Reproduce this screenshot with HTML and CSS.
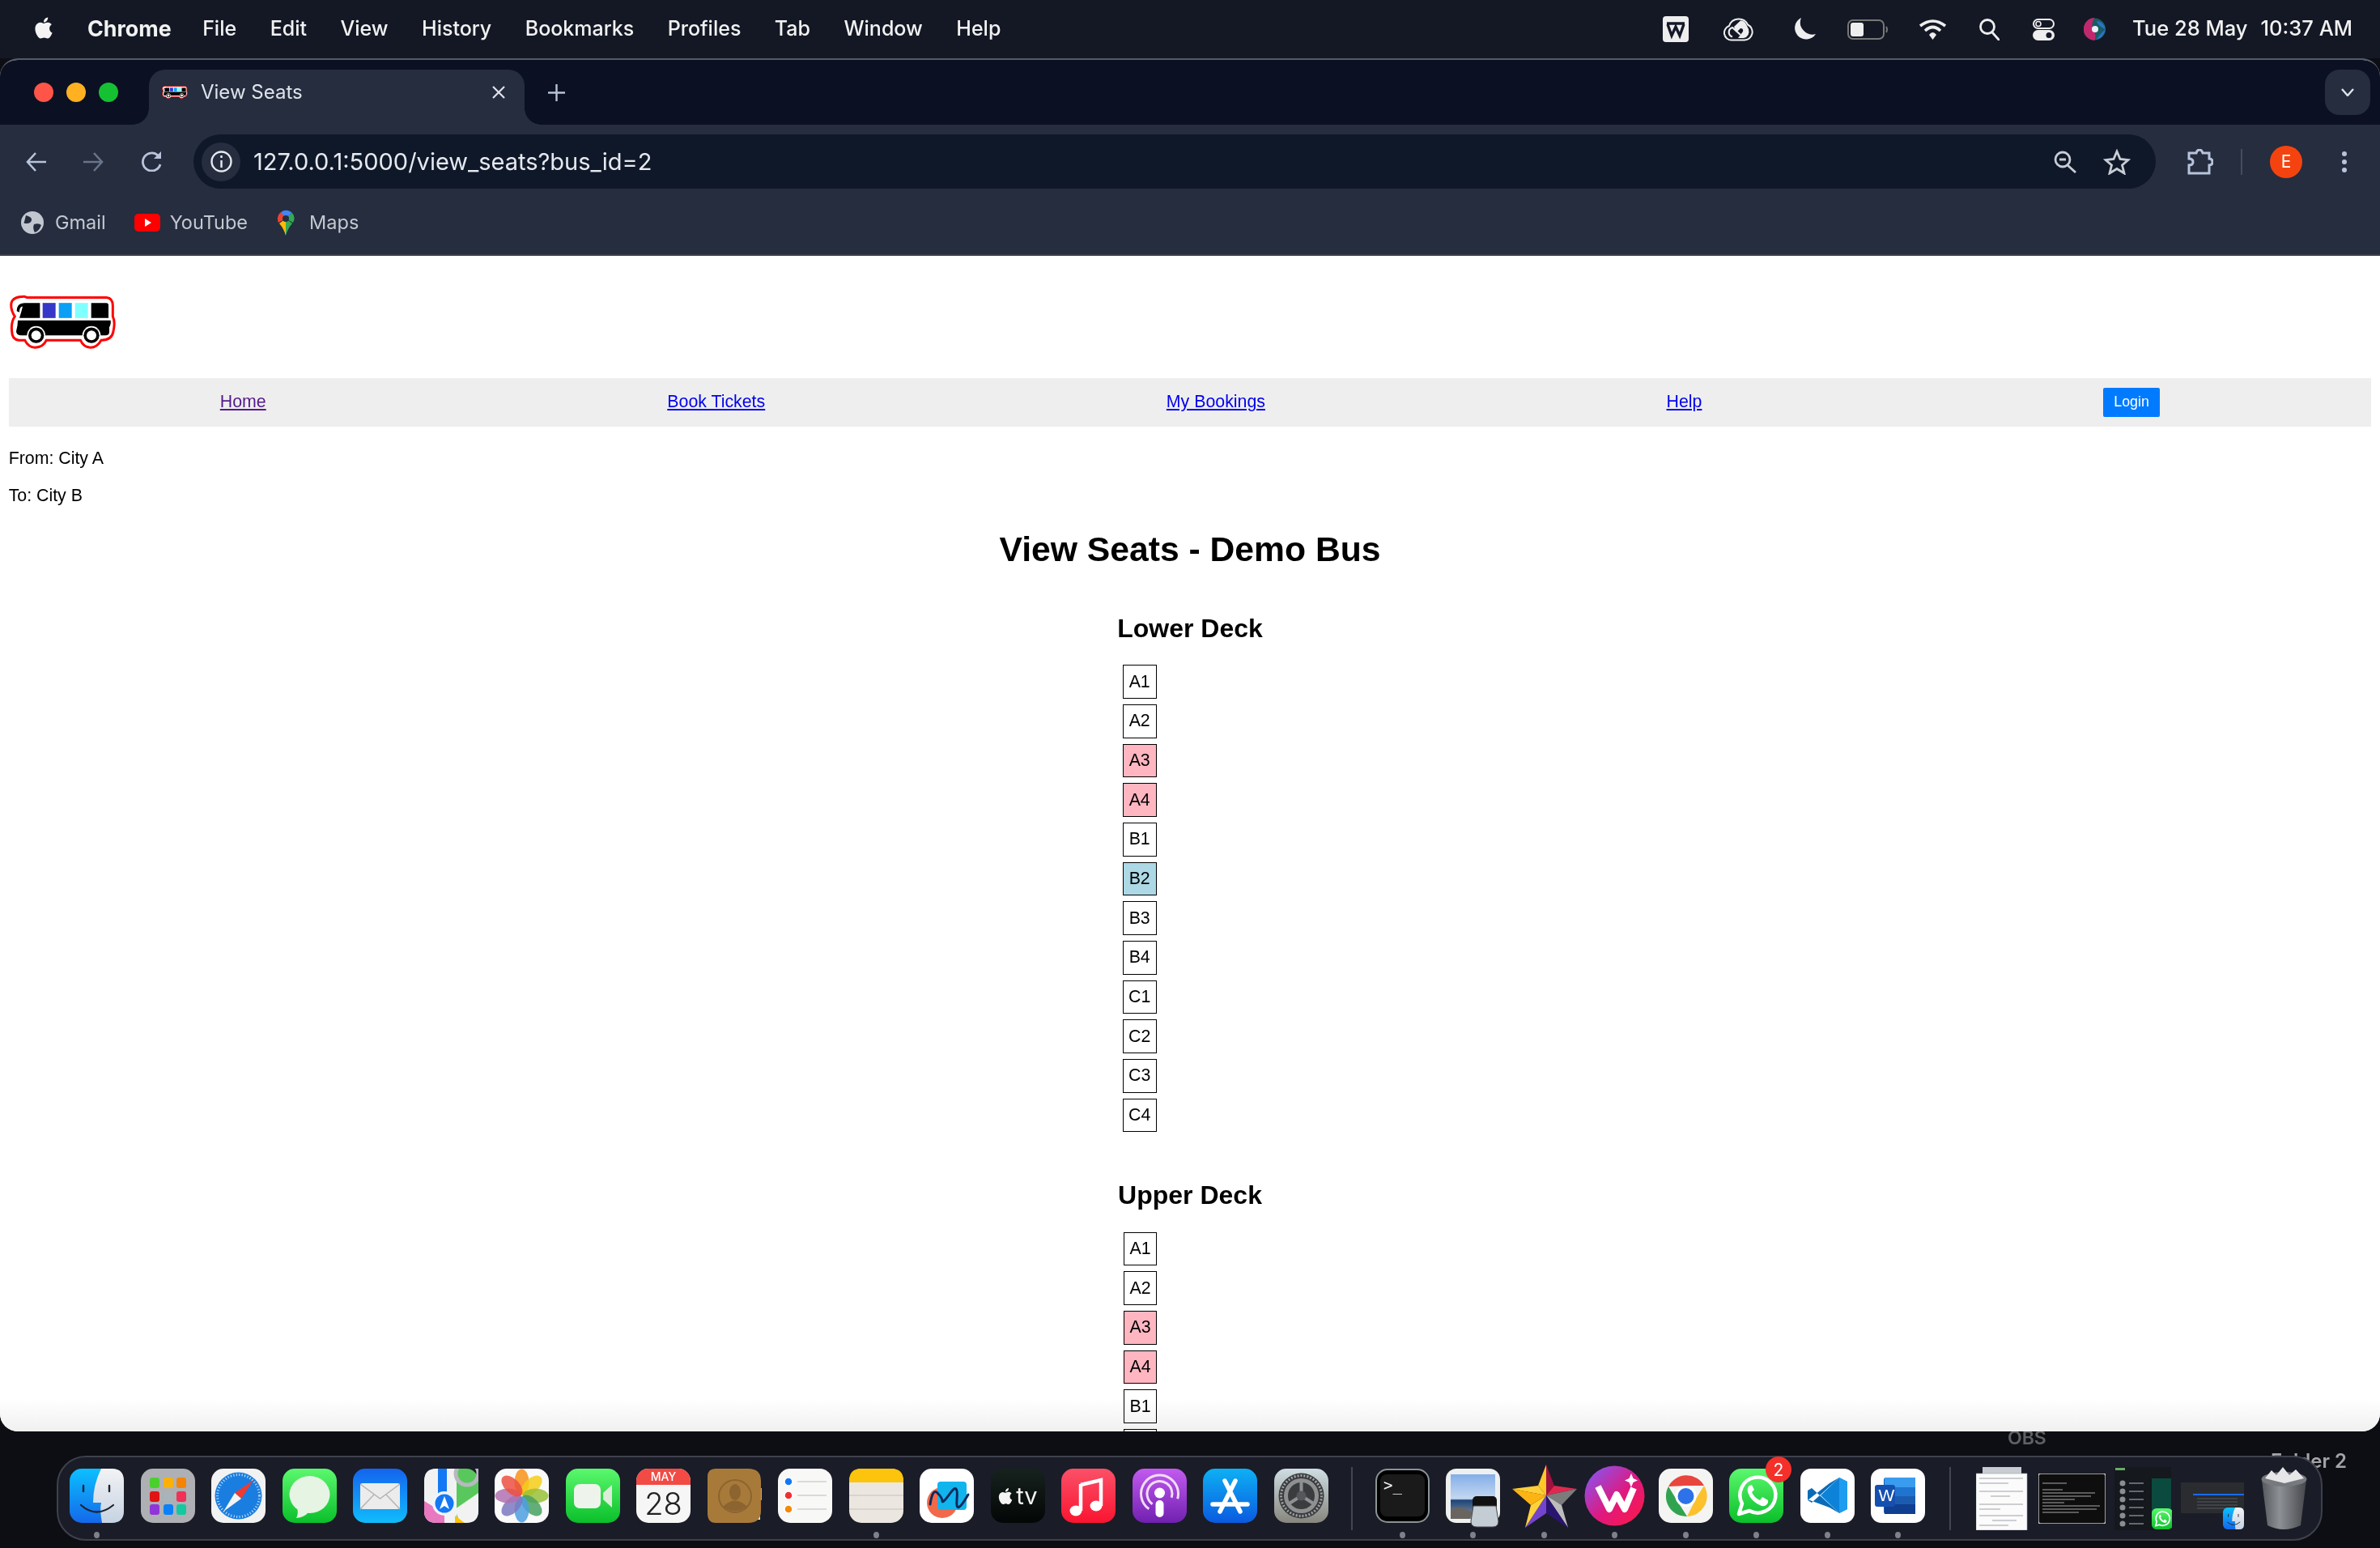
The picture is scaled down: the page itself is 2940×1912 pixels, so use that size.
FILE: index.html
```html
<!DOCTYPE html>
<html lang="en">
<head>
  <meta charset="UTF-8">
  <title>View Seats</title>
  <link rel="stylesheet" href="styles.css">
</head>
<body>
  <!-- Shared shapes and gradients -->
  <svg class="defs" width="0" height="0" aria-hidden="true">
    <defs>
      <linearGradient id="gFinder" x1="0" y1="0" x2="0" y2="1"><stop offset="0" stop-color="#0cc0ff"/><stop offset="1" stop-color="#1468ea"/></linearGradient>
      <linearGradient id="gFinderR" x1="0" y1="0" x2="0" y2="1"><stop offset="0" stop-color="#f2f3f5"/><stop offset="1" stop-color="#c6d2e2"/></linearGradient>
      <linearGradient id="gGreen" x1="0" y1="0" x2="0" y2="1"><stop offset="0" stop-color="#5bf86e"/><stop offset="1" stop-color="#0abf2a"/></linearGradient>
      <linearGradient id="gMail" x1="0" y1="0" x2="0" y2="1"><stop offset="0" stop-color="#1464ee"/><stop offset="1" stop-color="#10bcfc"/></linearGradient>
      <linearGradient id="gMusic" x1="0" y1="0" x2="0" y2="1"><stop offset="0" stop-color="#fb5068"/><stop offset="1" stop-color="#fa1430"/></linearGradient>
      <linearGradient id="gPod" x1="0" y1="0" x2="0" y2="1"><stop offset="0" stop-color="#c35af0"/><stop offset="1" stop-color="#7020b0"/></linearGradient>
      <linearGradient id="gStore" x1="0" y1="0" x2="0" y2="1"><stop offset="0" stop-color="#0eb0f4"/><stop offset="1" stop-color="#0a5ae0"/></linearGradient>
      <linearGradient id="gSet" x1="0" y1="0" x2="0" y2="1"><stop offset="0" stop-color="#cfdde2"/><stop offset="1" stop-color="#87867e"/></linearGradient>
      <linearGradient id="gViv" x1="0" y1="0" x2="1" y2="1"><stop offset="0" stop-color="#7d5cff"/><stop offset=".55" stop-color="#e0187e"/><stop offset="1" stop-color="#ff1a40"/></linearGradient>
      <linearGradient id="gSea" x1="0" y1="0" x2="0" y2="1"><stop offset="0" stop-color="#84aee8"/><stop offset=".55" stop-color="#c4d8f2"/><stop offset=".58" stop-color="#1d4478"/><stop offset="1" stop-color="#8c98a4"/></linearGradient>
      <linearGradient id="gTrash" x1="0" y1="0" x2="1" y2="0"><stop offset="0" stop-color="#55585c"/><stop offset=".4" stop-color="#8d9094"/><stop offset="1" stop-color="#45474b"/></linearGradient>
      <symbol id="apple" viewBox="0 0 24 24"><path d="M12.152 6.896c-.948 0-2.415-1.078-3.96-1.04-2.04.027-3.91 1.183-4.961 3.014-2.117 3.675-.546 9.103 1.519 12.09 1.013 1.454 2.208 3.09 3.792 3.039 1.52-.065 2.09-.987 3.935-.987 1.831 0 2.35.987 3.96.948 1.637-.026 2.676-1.48 3.676-2.948 1.156-1.688 1.636-3.325 1.662-3.415-.039-.013-3.182-1.221-3.22-4.857-.026-3.04 2.48-4.494 2.597-4.559-1.429-2.09-3.623-2.324-4.39-2.376-2-.156-3.675 1.09-4.61 1.09zM15.53 3.83c.843-1.012 1.4-2.427 1.245-3.83-1.207.052-2.662.805-3.532 1.818-.78.896-1.454 2.338-1.273 3.714 1.338.104 2.715-.688 3.559-1.701"/></symbol>
      <symbol id="bus" viewBox="33 70 399 200">
        <path d="M42 100Q48 76 90 76L100 80H395Q418 82 418 110V150Q428 170 420 205Q415 238 375 238Q360 265 335 265Q310 265 298 238H172Q160 265 130 265Q105 265 92 238H70Q44 235 44 205Q40 170 55 150Q38 125 42 100Z" fill="#fff" stroke="#f00" stroke-width="9"/>
        <path d="M62 130Q62 100 90 100H148V156H72Q80 130 84 113Q72 113 72 135Z"/>
        <rect x="158" y="100" width="48" height="56" fill="#3636c8"/>
        <rect x="218" y="100" width="48" height="56" fill="#0aa0f5"/>
        <rect x="278" y="100" width="48" height="56" fill="#80ffff"/>
        <path d="M338 100H394Q402 100 402 108V156H338Z"/>
        <path d="M66 165H410Q412 180 405 190V208Q405 220 390 220H80Q60 220 60 205Q66 185 66 165Z"/>
        <circle cx="134" cy="220" r="34" fill="#fff"/><circle cx="134" cy="220" r="29"/><circle cx="134" cy="220" r="18" fill="#fff"/>
        <circle cx="339" cy="220" r="34" fill="#fff"/><circle cx="339" cy="220" r="29"/><circle cx="339" cy="220" r="18" fill="#fff"/>
      </symbol>
      <symbol id="finderFace" viewBox="0 0 67 67">
        <rect width="67" height="67" rx="15" fill="url(#gFinder)"/>
        <path d="M39 0H52Q67 0 67 15V52Q67 67 52 67H40Q37 50 39 42H29Q29 20 39 0Z" fill="url(#gFinderR)"/>
        <path d="M17 21V28M49 21V28" stroke="#1c2430" stroke-width="2.4" stroke-linecap="round"/>
        <path d="M14 45Q33 62 54 45" fill="none" stroke="#1c2430" stroke-width="2.2" stroke-linecap="round"/>
      </symbol>
      <symbol id="waFace" viewBox="0 0 67 67">
        <rect width="67" height="67" rx="15" fill="url(#gGreen)"/>
        <path d="M12 56L16 43A22 22 0 1 1 25 52Z" fill="none" stroke="#fff" stroke-width="4.5" stroke-linejoin="round"/>
        <path d="M25 21Q22 23 23 29Q27 41 40 46Q46 47 48 42L48 39L41 35L38 39Q31 36 28 29L31 26L28 20Z" fill="#fff"/>
      </symbol>
    </defs>
  </svg>

  <!-- macOS menu bar -->
  <header class="menubar">
    <svg class="menu-apple" width="26" height="31"><use href="#apple"/></svg>
    <nav class="menu-items">
      <span class="menu-app">Chrome</span>
      <span>File</span><span>Edit</span><span>View</span><span>History</span><span>Bookmarks</span><span>Profiles</span><span>Tab</span><span>Window</span><span>Help</span>
    </nav>
    <div class="status">
      <svg class="st-w" width="32" height="32" viewBox="0 0 32 32"><rect width="32" height="32" rx="4" fill="#eee"/><path d="M5 9H27M6 10L11 24L16 13L21 24L26 10" fill="none" stroke="#15182a" stroke-width="3.4"/></svg>
      <svg class="st-cc" width="38" height="30" viewBox="0 0 38 30"><path d="M11 28.500A9 9 0 0 1 8 11A12.500 12.500 0 0 1 31 9.500A10 10 0 0 1 27 28.500Z" fill="none" stroke="#eee" stroke-width="2"/><path d="M14 12L22 4.500Q27 4 29 9L32 15Q34 24 26 26H19L25 18Q26 14 22 14L17 19Z" fill="#eee"/><path d="M12 24.500A6 6 0 0 1 12 13L22 22" fill="none" stroke="#eee" stroke-width="2.200"/></svg>
      <svg class="st-moon" width="29" height="28" viewBox="0 0 29 28"><path d="M11 0A14 14 0 1 0 29 20A15 15 0 0 1 11 0Z" fill="#eee"/></svg>
      <svg class="st-batt" width="50" height="25" viewBox="0 0 50 25"><rect x="1" y="1" width="44" height="23" rx="6" fill="none" stroke="#777" stroke-width="2"/><rect x="4" y="4" width="16" height="17" rx="3" fill="#eee"/><path d="M48 9Q50 12.500 48 16" stroke="#777" stroke-width="2" fill="none"/></svg>
      <svg class="st-wifi" width="35" height="26" viewBox="0 0 35 26" fill="none" stroke="#eee" stroke-width="3.6"><path d="M2 9Q17.500-3 33 9M8 15Q17.500 6 27 15"/><path d="M13 20Q17.500 14 22 20L17.500 26Z" fill="#eee" stroke="none"/></svg>
      <svg class="st-search" width="25" height="27" viewBox="0 0 25 27" fill="none" stroke="#eee" stroke-width="2.8"><circle cx="10" cy="10" r="8.500"/><path d="M16 17L24 26" stroke-linecap="round"/></svg>
      <svg class="st-ctrl" width="27" height="27" viewBox="0 0 27 27"><rect x="1" y="1" width="25" height="11" rx="5.500" fill="none" stroke="#eee" stroke-width="2"/><circle cx="7" cy="6.500" r="3" fill="none" stroke="#eee" stroke-width="1.600"/><rect y="14" width="27" height="13" rx="6.500" fill="#eee"/><circle cx="20" cy="20.500" r="3.500" fill="#15182a"/></svg>
      <svg class="st-siri" width="27" height="28" viewBox="0 0 27 28"><circle cx="13.500" cy="14" r="13.500" fill="#1a5c64"/><path d="M0 14A13.500 13.500 0 0 1 13.500 0Q8 7 12 14T13.500 28A13.500 13.500 0 0 1 0 14Z" fill="#c0286e"/><path d="M27 14Q18 11 16 4Q24 4 27 14ZM27 14Q20 20 15 27Q25 25 27 14Z" fill="#2a74c4"/><circle cx="14" cy="14" r="4" fill="#e8f0f8"/></svg>
      <span class="st-date">Tue 28 May</span>
      <span class="st-time">10:37 AM</span>
    </div>
  </header>

  <!-- Desktop labels peeking out behind the dock -->
  <span class="desk-label desk-obs">OBS</span>
  <span class="desk-label desk-folder">Folder 2</span>

  <!-- Browser window -->
  <section class="window">
    <div class="tabstrip">
      <div class="traffic"><i class="tl-red"></i><i class="tl-yellow"></i><i class="tl-green"></i></div>
      <div class="tab">
        <svg class="tab-icon" width="32" height="20"><use href="#bus"/></svg>
        <span class="tab-title">View Seats</span>
        <svg class="tab-close" width="16" height="16" viewBox="0 0 16 16"><path d="M1 1L15 15M15 1L1 15" stroke="#dfe3ea" stroke-width="2.200"/></svg>
      </div>
      <svg class="tab-new" width="21" height="21" viewBox="0 0 21 21"><path d="M10.500 0V21M0 10.500H21" stroke="#b8c2d8" stroke-width="2.400"/></svg>
      <div class="tab-search"><svg width="16" height="10" viewBox="0 0 16 10"><path d="M1 1L8 9L15 1" fill="none" stroke="#dfe3ea" stroke-width="2.400"/></svg></div>
    </div>

    <div class="toolbar">
      <svg class="tb-back" width="25" height="24" viewBox="0 0 25 24" fill="none" stroke="#b8c4dc" stroke-width="2.600"><path d="M25 12H2M12 1L2 12L12 23"/></svg>
      <svg class="tb-fwd" width="25" height="24" viewBox="0 0 25 24" fill="none" stroke="#6a7488" stroke-width="2.600"><path d="M0 12H23M13 1L23 12L13 23"/></svg>
      <svg class="tb-reload" width="26" height="25" viewBox="0 0 26 25" fill="none" stroke="#b8c4dc" stroke-width="2.800"><path d="M23 16A11 11 0 1 1 20 5"/><path d="M24 0V9H15" fill="#b8c4dc" stroke="none"/></svg>
      <div class="omnibox">
        <div class="omni-info"><svg width="27" height="27" viewBox="0 0 27 27" fill="none" stroke="#e6e9ef" stroke-width="2.400"><circle cx="13.500" cy="13.500" r="12"/><path d="M13.500 12V21M13.500 6V9"/></svg></div>
        <span class="omni-url">127.0.0.1:5000/view_seats?bus_id=2</span>
        <svg class="omni-zoom" width="28" height="28" viewBox="0 0 28 28" fill="none" stroke="#c8ccd4" stroke-width="2.800"><circle cx="11" cy="11" r="9"/><path d="M17 18L27 27M7 11H15"/></svg>
        <svg class="omni-star" width="34" height="32" viewBox="0 0 34 32" fill="none" stroke="#c8ccd4" stroke-width="2.800"><path d="M17 3L21 12.500L31 13.500L23.500 20L26 30L17 24.500L8 30L10.500 20L3 13.500L13 12.500Z"/></svg>
      </div>
      <svg class="tb-ext" width="33" height="32" viewBox="0 0 33 32" fill="none" stroke="#b8c4dc" stroke-width="3"><path d="M3 5H12Q13 1 16 1T20 5H28V12Q32 12 32 16T28 20V30H3V20Q8 20 8 16T3 12Z"/></svg>
      <i class="tb-sep"></i>
      <div class="avatar">E</div>
      <svg class="tb-menu" width="6" height="26" viewBox="0 0 6 26" fill="#b8c4dc"><circle cx="3" cy="3" r="3"/><circle cx="3" cy="13" r="3"/><circle cx="3" cy="23" r="3"/></svg>
    </div>

    <div class="bookmarks">
      <div class="bm bm-gmail">
        <svg width="28" height="28" viewBox="0 0 28 28"><circle cx="14" cy="14" r="14" fill="#c2c6cf"/><path d="M6 5Q14 7 13 11T7 15T4 13ZM16 16Q22 14 25 17Q22 25 17 26Q14 21 16 16Z" fill="#252d3f"/></svg>
        <span>Gmail</span>
      </div>
      <div class="bm bm-yt">
        <svg width="32" height="22" viewBox="0 0 32 22"><rect width="32" height="22" rx="5" fill="#f00"/><path d="M13 6L21 11L13 16Z" fill="#fff"/></svg>
        <span>YouTube</span>
      </div>
      <div class="bm bm-maps">
        <svg width="22" height="32" viewBox="0 0 22 32"><path d="M11 32Q9 24 3 17L11 11Z" fill="#fbbc04"/><path d="M11 32Q13 24 19 17L11 11Z" fill="#34a853"/><path d="M2 16A10.500 10.500 0 0 1 5 3L12 10Z" fill="#ea4335"/><path d="M5 3A10.500 10.500 0 0 1 19 4L11 11Z" fill="#4285f4"/><path d="M19 4A10.500 10.500 0 0 1 20 16L11 11Z" fill="#34a853"/><circle cx="11" cy="11" r="4" fill="#252d3f"/></svg>
        <span>Maps</span>
      </div>
    </div>

    <!-- Page content -->
    <main class="page">
      <div class="site-head"><svg class="logo" width="133" height="67"><use href="#bus"/></svg></div>
      <nav class="site-nav">
        <a class="visited" href="#">Home</a>
        <a href="#">Book Tickets</a>
        <a href="#">My Bookings</a>
        <a href="#">Help</a>
        <button class="login">Login</button>
      </nav>
      <p class="route route-first">From: City A</p>
      <p class="route">To: City B</p>
      <h1>View Seats - Demo Bus</h1>
      <div class="decks">
        <section class="deck">
          <h2>Lower Deck</h2>
          <div class="seat">A1</div><div class="seat">A2</div><div class="seat booked">A3</div><div class="seat booked">A4</div>
          <div class="seat">B1</div><div class="seat mine">B2</div><div class="seat">B3</div><div class="seat">B4</div>
          <div class="seat">C1</div><div class="seat">C2</div><div class="seat">C3</div><div class="seat">C4</div>
        </section>
        <section class="deck">
          <h2>Upper Deck</h2>
          <div class="seat">A1</div><div class="seat">A2</div><div class="seat booked">A3</div><div class="seat booked">A4</div>
          <div class="seat">B1</div><div class="seat">B2</div>
        </section>
      </div>
    </main>
  </section>

  <!-- Dock -->
  <footer class="dock">
    <div class="dock-item running"><svg width="67" height="67"><use href="#finderFace"/></svg></div>
    <div class="dock-item"><svg width="67" height="67" viewBox="0 0 67 67"><rect width="67" height="67" rx="15" fill="#aeb0b4"/>
      <rect x="11" y="11" width="12" height="13" rx="3" fill="#4ad02c"/><rect x="28" y="11" width="12" height="13" rx="3" fill="#fcb008"/><rect x="44" y="11" width="12" height="13" rx="3" fill="#f58404"/>
      <rect x="11" y="28" width="12" height="13" rx="3" fill="#e01414"/><rect x="28" y="28" width="12" height="13" rx="3" fill="#a8b4b8"/><rect x="44" y="28" width="12" height="13" rx="3" fill="#f03058"/>
      <rect x="11" y="44" width="12" height="13" rx="3" fill="#9036d8"/><rect x="28" y="44" width="12" height="13" rx="3" fill="#0c80f8"/><rect x="44" y="44" width="12" height="13" rx="3" fill="#14c8a0"/></svg></div>
    <div class="dock-item"><svg width="67" height="67" viewBox="0 0 67 67"><rect width="67" height="67" rx="15" fill="#f2f2f2"/><circle cx="33.500" cy="33.500" r="29" fill="#1a7ee0"/><circle cx="33.500" cy="33.500" r="26" fill="none" stroke="#cfe4f8" stroke-width="3" stroke-dasharray="1 2.500"/><path d="M52 14L29 30L37 37Z" fill="#f03a30"/><path d="M15 53L29 30L37 37Z" fill="#f4f4f4"/></svg></div>
    <div class="dock-item"><svg width="67" height="67" viewBox="0 0 67 67"><rect width="67" height="67" rx="15" fill="url(#gGreen)"/><ellipse cx="33.500" cy="32" rx="25" ry="23" fill="#e6f4e4"/><path d="M18 48Q20 56 17 61Q27 60 32 54Z" fill="#e6f4e4"/></svg></div>
    <div class="dock-item"><svg width="67" height="67" viewBox="0 0 67 67"><rect width="67" height="67" rx="15" fill="url(#gMail)"/><rect x="9" y="18" width="49" height="32" rx="3" fill="#ececec"/><path d="M9 19L33.500 37L58 19M9 50L26 32M58 50L41 32" fill="none" stroke="#b4b4b4" stroke-width="1.500"/></svg></div>
    <div class="dock-item"><svg width="67" height="67" viewBox="0 0 67 67"><rect width="67" height="67" rx="15" fill="#58c85c"/><path d="M0 15Q0 0 15 0H40V67H15Q0 67 0 52Z" fill="#f2f2f2"/><path d="M0 40L25 55V67H15Q0 67 0 52Z" fill="#e878c0"/><path d="M38 50L67 30V52Q67 67 52 67H44Z" fill="#f2f2f2"/><path d="M38 58L50 67H38Z" fill="#fcc400"/><rect x="17" y="0" width="11" height="36" fill="#1478f4"/><circle cx="53" cy="6" r="14" fill="none" stroke="#b8b8c0" stroke-width="5"/><circle cx="25" cy="43" r="15" fill="#f0f4fa"/><circle cx="25" cy="43" r="11.500" fill="#1478f4"/><path d="M25 34L31 50L25 46L19 50Z" fill="#fff"/></svg></div>
    <div class="dock-item"><svg width="67" height="67" viewBox="0 0 67 67"><rect width="67" height="67" rx="15" fill="#fafafa"/><g transform="translate(33.500 33.500)"><ellipse cy="-17" rx="9" ry="16" fill="#f89018" opacity=".85"/><ellipse cy="-17" rx="9" ry="16" fill="#f4cc18" opacity=".85" transform="rotate(45)"/><ellipse cy="-17" rx="9" ry="16" fill="#98c038" opacity=".85" transform="rotate(90)"/><ellipse cy="-17" rx="9" ry="16" fill="#48a060" opacity=".85" transform="rotate(135)"/><ellipse cy="-17" rx="9" ry="16" fill="#4c9ee0" opacity=".85" transform="rotate(180)"/><ellipse cy="-17" rx="9" ry="16" fill="#7c78c0" opacity=".85" transform="rotate(225)"/><ellipse cy="-17" rx="9" ry="16" fill="#b070b0" opacity=".85" transform="rotate(270)"/><ellipse cy="-17" rx="9" ry="16" fill="#ec5040" opacity=".85" transform="rotate(315)"/></g></svg></div>
    <div class="dock-item"><svg width="67" height="67" viewBox="0 0 67 67"><rect width="67" height="67" rx="15" fill="url(#gGreen)"/><rect x="10" y="19" width="33" height="30" rx="7" fill="#eef4ec"/><path d="M46 30L57 20V48L46 38Z" fill="#dcecd8"/></svg></div>
    <div class="dock-item"><div class="cal"><span class="cal-month">MAY</span><span class="cal-day">28</span></div></div>
    <div class="dock-item"><svg width="67" height="67" viewBox="0 0 67 67"><rect x="50" y="8" width="15" height="55" fill="#e8e8e8"/><rect x="60" y="24" width="7" height="15" fill="#f0a030"/><path d="M10 0H50Q66 0 66 15V52Q66 67 50 67H10Q0 67 0 55V10Q0 0 10 0Z" fill="#a87a3a"/><circle cx="34" cy="34" r="20" fill="none" stroke="#8c6430" stroke-width="2"/><ellipse cx="34" cy="29" rx="7" ry="10" fill="#8c6430"/><path d="M19 47Q34 32 49 47Q34 58 19 47Z" fill="#8c6430"/></svg></div>
    <div class="dock-item"><svg width="67" height="67" viewBox="0 0 67 67"><rect width="67" height="67" rx="15" fill="#f8f8f6"/><circle cx="13" cy="16" r="5" fill="#1478f4" stroke="#fff" stroke-width="1.500"/><circle cx="13" cy="33" r="5" fill="#f03030" stroke="#fff" stroke-width="1.500"/><circle cx="13" cy="50" r="5" fill="#f58a04" stroke="#fff" stroke-width="1.500"/><path d="M24 16H60M24 33H60M24 50H60" stroke="#d0d0d0" stroke-width="1.500"/></svg></div>
    <div class="dock-item running"><svg width="67" height="67" viewBox="0 0 67 67"><rect width="67" height="67" rx="15" fill="#ebe7e0"/><path d="M0 17V15Q0 0 15 0H52Q67 0 67 15V17Z" fill="#fcc40c"/><path d="M0 33H67M0 50H67" stroke="#d2cec8" stroke-width="1.500"/></svg></div>
    <div class="dock-item"><svg width="67" height="67" viewBox="0 0 67 67"><rect width="67" height="67" rx="15" fill="#fff"/><circle cx="28" cy="42" r="19" fill="#f2694a"/><rect x="22" y="16" width="36" height="35" rx="4" fill="#12b4ee"/><path d="M13 44Q16 24 22 30T28 40T38 30T46 38T60 32" fill="none" stroke="#0c2a5c" stroke-width="3" stroke-linecap="round"/></svg></div>
    <div class="dock-item"><div class="tv"><svg width="20" height="24"><use href="#apple"/></svg><span>tv</span></div></div>
    <div class="dock-item"><svg width="67" height="67" viewBox="0 0 67 67"><rect width="67" height="67" rx="15" fill="url(#gMusic)"/><path d="M24 20L49 14V46" fill="none" stroke="#fff" stroke-width="4.500"/><path d="M24 19V52" stroke="#fff" stroke-width="4.500"/><ellipse cx="18" cy="52" rx="7.500" ry="6.500" fill="#fff"/><ellipse cx="43" cy="46" rx="7.500" ry="6.500" fill="#fff"/></svg></div>
    <div class="dock-item"><svg width="67" height="67" viewBox="0 0 67 67" fill="none"><rect width="67" height="67" rx="15" fill="url(#gPod)"/><circle cx="33.500" cy="31" r="23" stroke="#f0dcf8" stroke-width="3" stroke-dasharray="100 45" transform="rotate(125 33.500 31)"/><circle cx="33.500" cy="31" r="15.500" stroke="#f0dcf8" stroke-width="3" stroke-dasharray="68 30" transform="rotate(125 33.500 31)"/><circle cx="33.500" cy="30" r="6.500" fill="#fff"/><rect x="28.500" y="39" width="10" height="21" rx="5" fill="#fff"/></svg></div>
    <div class="dock-item"><svg width="67" height="67" viewBox="0 0 67 67"><rect width="67" height="67" rx="15" fill="url(#gStore)"/><path d="M21 53L40 15M46 53L27 15M12 44H55" stroke="#fff" stroke-width="5.500" stroke-linecap="round"/></svg></div>
    <div class="dock-item"><svg width="67" height="67" viewBox="0 0 67 67" fill="none"><rect width="67" height="67" rx="15" fill="url(#gSet)"/><circle cx="33.500" cy="33.500" r="28" fill="#3a3c3e"/><circle cx="33.500" cy="33.500" r="25" stroke="#a0a4a6" stroke-width="3" stroke-dasharray="2 2"/><circle cx="33.500" cy="33.500" r="19" stroke="#8e9092" stroke-width="5"/><path d="M33.500 33.500V14M33.500 33.500L17 44M33.500 33.500L50 44" stroke="#8e9092" stroke-width="4"/><circle cx="33.500" cy="33.500" r="6" fill="#55585a"/></svg></div>
    <i class="dock-sep"></i>
    <div class="dock-item running"><svg width="67" height="67" viewBox="0 0 67 67"><rect x="1" y="1" width="65" height="65" rx="14" fill="#000" stroke="#8a9494" stroke-width="2"/><rect x="6" y="7" width="55" height="52" rx="8" fill="#1a1a1a"/><text class="term-text" x="10" y="27">&gt;_</text></svg></div>
    <div class="dock-item running"><svg class="over" width="67" height="72" viewBox="0 0 67 72"><rect width="67" height="67" rx="13" fill="#eef0f0"/><rect x="6" y="7" width="55" height="55" fill="url(#gSea)"/><path d="M6 50Q20 44 32 54L30 62H6Z" fill="#6a6460"/><rect x="33" y="34" width="30" height="17" rx="5" fill="#111"/><path d="M34 46H62L65 65Q65 72 58 72H38Q31 72 31 65Z" fill="#c4ccd4" stroke="#444" stroke-width="1"/></svg></div>
    <div class="dock-item running"><svg width="67" height="67" viewBox="0 0 67 67" class="over"><path d="M36 -5L46 21L36 33Z" fill="#a01040"/><path d="M46 21L74 25L36 33Z" fill="#e0284e"/><path d="M74 25L55 45L36 33Z" fill="#7c7c7c"/><path d="M55 45L63 73L36 33Z" fill="#bcbcbc"/><path d="M63 73L36 55L36 33Z" fill="#2a1470"/><path d="M36 55L10 73L36 33Z" fill="#7444cc"/><path d="M10 73L17 45L36 33Z" fill="#ffd23a"/><path d="M17 45L-6 25L36 33Z" fill="#fcb414"/><path d="M-6 25L26 21L36 33Z" fill="#ffcf38"/><path d="M26 21L36 -5V33Z" fill="#ffc828"/></svg></div>
    <div class="dock-item running"><svg width="67" height="67" viewBox="0 0 67 67" class="over"><circle cx="33.500" cy="33.500" r="37" fill="url(#gViv)"/><path d="M13 22L27 50L36 32L46 50L57 24" fill="none" stroke="#fff" stroke-width="8" stroke-linejoin="round"/><path d="M54 6L56.500 12L62 14.500L56.500 17L54 23L51.500 17L46 14.500L51.500 12Z" fill="#fff"/></svg></div>
    <div class="dock-item running"><svg width="67" height="67" viewBox="0 0 67 67"><rect width="67" height="67" rx="15" fill="#f4f4f2"/><path d="M12 22A25 25 0 0 1 56 21L34 21Z" fill="#e8453c"/><path d="M56 21A25 25 0 0 1 35 59L46 37Z" fill="#fcc12d"/><path d="M35 59A25 25 0 0 1 12 22L23 40Z" fill="#31a350"/><circle cx="33.500" cy="34" r="13" fill="#fff"/><circle cx="33.500" cy="34" r="10" fill="#2d72e8"/></svg></div>
    <div class="dock-item running"><svg width="67" height="67" class="over"><use href="#waFace"/></svg><b class="badge">2</b></div>
    <div class="dock-item running"><svg width="67" height="67" viewBox="0 0 67 67"><rect width="67" height="67" rx="13" fill="#fff"/><path d="M48 11L25 33L48 55L58 50V16Z" fill="#0c83d8"/><path d="M48 11L58 16V50L48 55V40V26Z" fill="#1e9cf0"/><path d="M9 27L14 24L48 55L36 48L9 38ZM9 39L14 42L48 11L36 18Z" fill="#0a6cb8"/></svg></div>
    <div class="dock-item running"><svg width="67" height="67" viewBox="0 0 67 67"><rect width="67" height="67" rx="13" fill="#fff"/><rect x="16" y="11" width="39" height="45" rx="3" fill="#1c5cb0"/><rect x="17" y="11" width="38" height="12" fill="#3a9cee"/><rect x="17" y="23" width="38" height="11" fill="#1f74d0"/><rect x="17" y="44" width="38" height="12" fill="#103e90"/><rect x="5" y="20" width="25" height="27" rx="3" fill="#1550b0"/><text class="word-text" x="9.500" y="40">W</text></svg></div>
    <i class="dock-sep dock-sep-2"></i>
    <div class="thumbs">
      <svg width="64" height="78" viewBox="0 0 64 78"><rect x="8" y="0" width="48" height="10" fill="#c8ccd2"/><rect y="8" width="63" height="70" fill="#fbfbfb" stroke="#9aa" stroke-width=".6"/><path d="M4 14H58M4 20H40M4 30H58M18 36H42M4 46H58M4 52H30M4 60H58M20 66H50M4 72H40" stroke="#9ea2a8" stroke-width="1"/></svg>
      <svg width="83" height="62" viewBox="0 0 83 62"><rect width="83" height="62" rx="3" fill="#0e0e0e" stroke="#c8c8c8" stroke-width="1.500"/><path d="M5 12H35M5 20H30M5 24H70M5 28H65M5 32H45M5 36H32M5 40H76M5 44H72M5 48H50" stroke="#a8a8a8" stroke-width="1"/></svg>
      <svg class="thumb-wa" width="71" height="78" viewBox="0 0 71 78"><rect width="70" height="78" fill="#15181c"/><rect x="1" y="1" width="12" height="3" fill="#6a6"/><rect x="46" y="14" width="24" height="60" fill="#0b4a3e"/><g fill="#8a8e92"><circle cx="10" cy="20" r="3.500"/><circle cx="10" cy="30" r="3.500"/><circle cx="10" cy="40" r="3.500"/><circle cx="10" cy="50" r="3.500"/><circle cx="10" cy="60" r="3.500"/><circle cx="10" cy="70" r="3.500"/></g><path d="M18 20H36M18 30H36M18 40H36M18 50H36M18 60H36M18 70H36" stroke="#667" stroke-width="2"/><svg x="46" y="50" width="26" height="28"><use href="#waFace"/></svg></svg>
      <svg class="thumb-finder" width="78" height="58" viewBox="0 0 78 58"><rect y="0" width="78" height="38" fill="#2a2c30"/><rect x="15" y="14" width="63" height="2" fill="#1a6af0"/><path d="M20 20H70M20 24H70M20 28H70M20 32H70" stroke="#55585e" stroke-width="1"/><svg x="52" y="31" width="26" height="27" viewBox="0 0 67 67" preserveAspectRatio="none"><use href="#finderFace"/></svg></svg>
      <svg class="thumb-trash" width="59" height="78" viewBox="0 0 59 78"><path d="M2 16Q29 26 57 16L50 72Q29 82 9 72Z" fill="url(#gTrash)"/><ellipse cx="29.500" cy="15" rx="28" ry="9" fill="#767a7e"/><path d="M6 14L14 4L20 10L28 0L36 10L44 3L54 14L30 20Z" fill="#e6e6e8"/></svg>
    </div>
  </footer>
</body>
</html>
```

FILE: styles.css
```css
/* Reset and desktop backdrop */
html, body {
  margin: 0;
  padding: 0;
  width: 2940px;
  height: 1912px;
  overflow: hidden;
}
body {
  position: relative;
  display: flex;
  flex-direction: column;
  background: #0c0e14;
  font-family: Inter, "Liberation Sans", sans-serif;
}
.defs {
  position: absolute;
}

/* macOS menu bar */
.menubar {
  display: flex;
  align-items: center;
  height: 72px;
  padding: 0 34px 0 41px;
  background: #141825;
  color: #f2f2f2;
  font-size: 25px;
  font-weight: 500;
}
.menu-apple {
  fill: #f4f4f4;
  margin-bottom: 4px;
}
.menu-items {
  display: flex;
  gap: 41.5px;
  margin-left: 41px;
  margin-bottom: 3px;
}
.menu-app {
  margin-right: -3px;
  font-size: 26.8px;
  font-weight: 700;
  line-height: 30px;
}
.status {
  display: flex;
  align-items: center;
  margin-left: auto;
}
.st-cc { margin-left: 42px; }
.st-moon { margin-left: 48px; }
.st-batt { margin-left: 39px; }
.st-wifi { margin-left: 38px; }
.st-search { margin-left: 40px; }
.st-ctrl { margin-left: 41px; }
.st-siri { margin-left: 36px; }
.st-date { margin: 0 0 3px 33px; font-size: 25.5px; }
.st-time { margin: 0 0 3px 16px; font-size: 25.5px; }

/* Labels on the desktop behind the dock */
.desk-label {
  position: absolute;
  font-weight: 600;
}
.desk-obs {
  left: 2480px;
  top: 1762px;
  font-size: 23px;
  color: #606064;
}
.desk-folder {
  right: 41px;
  top: 1790px;
  font-size: 24px;
  color: #a4a4a8;
}

/* Browser window */
.window {
  position: relative;
  display: flex;
  flex-direction: column;
  height: 1694px;
  border-top: 2px solid #565a64;
  border-radius: 22px;
  overflow: hidden;
  background: #fff;
}
.tabstrip {
  display: flex;
  align-items: flex-end;
  height: 80px;
  flex: none;
  background: #0b1122;
}
.traffic {
  display: flex;
  gap: 16px;
  align-self: center;
  margin-left: 42px;
  width: 142px;
}
.traffic i {
  width: 24px;
  height: 24px;
  border-radius: 50%;
}
.tl-red { background: #ff5549; }
.tl-yellow { background: #ffb121; }
.tl-green { background: #15c132; }
.tab {
  position: relative;
  display: flex;
  align-items: center;
  width: 464px;
  height: 68px;
  box-sizing: border-box;
  padding: 0 24px 13px 16px;
  border-radius: 20px 20px 0 0;
  background: #252d3f;
  color: #dfe3ea;
  font-size: 24px;
}
/* Flared bottom corners of the active tab */
.tab::before, .tab::after {
  content: "";
  position: absolute;
  bottom: 0;
  width: 20px;
  height: 20px;
}
.tab::before {
  left: -20px;
  background: radial-gradient(circle at 0 0, #0b1122 19.5px, #252d3f 20px);
}
.tab::after {
  right: -20px;
  background: radial-gradient(circle at 100% 0, #0b1122 19.5px, #252d3f 20px);
}
.tab-icon {
  margin-right: 16px;
}
.tab-close {
  margin-left: auto;
}
.tab-new {
  align-self: center;
  margin-left: 29px;
}
.tab-search {
  display: flex;
  align-items: center;
  justify-content: center;
  align-self: center;
  width: 56px;
  height: 56px;
  margin-left: auto;
  margin-right: 12px;
  border-radius: 18px;
  background: #252d3f;
}

/* Address bar row */
.toolbar {
  display: flex;
  align-items: center;
  flex: none;
  height: 91px;
  padding-left: 32px;
  background: #252d3f;
}
.tb-fwd { margin-left: 46px; }
.tb-reload { margin-left: 47px; }
.omnibox {
  display: flex;
  align-items: center;
  width: 2424px;
  height: 67px;
  margin-left: 38px;
  padding: 0 31px 0 10px;
  box-sizing: border-box;
  border-radius: 34px;
  background: #0f1829;
  color: #e6e9ef;
}
.omni-info {
  display: flex;
  align-items: center;
  justify-content: center;
  width: 48px;
  height: 48px;
  border-radius: 50%;
  background: #252d3f;
}
.omni-url {
  margin-left: 16px;
  font-size: 29px;
  font-weight: 400;
}
.omni-zoom { margin-left: auto; }
.omni-star { margin-left: 33px; }
.tb-ext { margin-left: 38px; }
.tb-sep {
  width: 2px;
  height: 32px;
  margin-left: 34px;
  background: #444c5e;
}
.avatar {
  display: flex;
  align-items: center;
  justify-content: center;
  width: 40px;
  height: 40px;
  margin-left: 34px;
  border-radius: 50%;
  background: #f5430f;
  color: #fff;
  font-size: 21px;
}
.tb-menu { margin-left: 49px; }

/* Bookmarks row */
.bookmarks {
  display: flex;
  align-items: center;
  flex: none;
  height: 71px;
  padding: 0 0 10px 26px;
  box-sizing: border-box;
  background: #252d3f;
  border-bottom: 2px solid #3a3e48;
  color: #c4c8d0;
  font-size: 23.5px;
}
.bm {
  display: flex;
  align-items: center;
}
.bm-gmail span { margin-left: 14px; }
.bm-yt { margin-left: 35px; }
.bm-yt span { margin-left: 12px; }
.bm-maps { margin-left: 36px; }
.bm-maps span { margin-left: 18px; }

/* Page content, drawn at the 133% scale of the browser zoom */
.page {
  flex: 1;
  position: relative;
  min-height: 0;
  overflow: hidden;
  padding: 12px 10.67px 0;
  background: #fff;
  color: #000;
  font-family: "Liberation Sans", Arial, sans-serif;
  font-size: 21.33px;
}
.page::after {
  content: "";
  position: absolute;
  left: 0;
  right: 0;
  bottom: 0;
  height: 40px;
  background: linear-gradient(#fff, #f0f0f0);
  mix-blend-mode: multiply;
}
.site-head {
  display: flex;
  align-items: center;
  height: 138.5px;
}
.site-nav {
  display: flex;
  align-items: center;
  justify-content: space-around;
  height: 60px;
  padding: 0 13.33px;
  background: #eee;
}
.site-nav a { color: #00e; }
.site-nav a.visited { color: #551a8b; }
.login {
  height: 36px;
  padding: 0 13.33px;
  border: 0;
  border-radius: 2px;
  background: #007bff;
  color: #fff;
  font-family: inherit;
  font-size: 17.78px;
}
.route {
  margin: 21.33px 0;
}
.route-first {
  margin-top: 27px;
}
h1 {
  margin: 29.5px 0 0;
  text-align: center;
  font-size: 42.67px;
}
.decks {
  display: flex;
  flex-direction: column;
  align-items: center;
  margin-top: 54.5px;
}
.deck {
  margin-bottom: 52.67px;
}
h2 {
  margin: 0 0 26.67px;
  font-size: 32px;
}
.seat {
  display: flex;
  align-items: center;
  justify-content: center;
  width: 41.67px;
  height: 41.67px;
  margin: 7px 6.67px;
  box-sizing: border-box;
  border: 1px solid #000;
  background: #fff;
}
.seat.booked { background: #ffb6c1; }
.seat.mine { background: #add8e6; }
h2 + .seat { margin-top: 0; }

/* Dock */
.dock {
  position: relative;
  display: flex;
  align-items: flex-start;
  gap: 20.5px;
  width: 2799px;
  height: 105px;
  box-sizing: border-box;
  margin: 30px 0 0 70px;
  padding: 14px 0 0 14px;
  border: 2px solid #3e404c;
  border-radius: 36px;
  background: #1a1c28;
}
.dock-item {
  position: relative;
  flex: none;
  width: 67px;
  height: 67px;
}
.dock-item svg {
  display: block;
}
.dock-item svg.over {
  overflow: visible;
}
.running::after {
  content: "";
  position: absolute;
  left: 30px;
  top: 78px;
  width: 7px;
  height: 8px;
  border-radius: 50%;
  background: #7e808a;
}
.dock-sep {
  flex: none;
  width: 2px;
  height: 78px;
  margin: -2px 7.5px 0;
  background: #44464f;
}
.dock-sep-2 {
  margin: -2px 11px 0 9px;
}
.cal {
  display: flex;
  flex-direction: column;
  align-items: center;
  width: 67px;
  height: 67px;
  overflow: hidden;
  border-radius: 15px;
  background: #f6f6f6;
  color: #222;
}
.cal-month {
  width: 100%;
  height: 20px;
  background: #f24a44;
  color: #fff;
  font-size: 14px;
  font-weight: 500;
  line-height: 20px;
  text-align: center;
}
.cal-day {
  font-size: 38px;
  font-weight: 300;
  line-height: 46px;
}
.tv {
  display: flex;
  align-items: center;
  justify-content: center;
  gap: 3px;
  width: 67px;
  height: 67px;
  border-radius: 15px;
  background: linear-gradient(#16221e, #040606);
  color: #f4f4f4;
  fill: #f4f4f4;
  font-size: 29px;
}
.term-text {
  fill: #f2f2f2;
  font-family: "DejaVu Sans Mono", monospace;
  font-size: 19px;
}
.word-text {
  fill: #fff;
  font-family: "Liberation Sans", sans-serif;
  font-size: 21px;
}
.badge {
  position: absolute;
  left: 45px;
  top: -15px;
  display: flex;
  align-items: center;
  justify-content: center;
  width: 32px;
  height: 32px;
  border-radius: 50%;
  background: #f4302a;
  color: #fff;
  font-size: 21px;
  font-weight: 400;
}
.thumbs {
  display: flex;
  align-items: center;
  gap: 13px;
  height: 78px;
  margin-top: -2px;
}
.thumb-wa { margin-left: -2px; }
.thumb-finder { margin: 18px 0 0 -2px; }
.thumb-trash { margin-left: 7px; }
```
